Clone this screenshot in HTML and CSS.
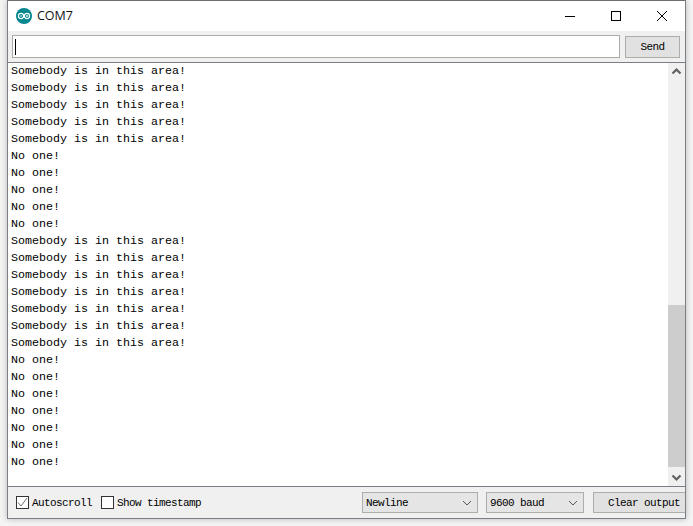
FILE: index.html
```html
<!DOCTYPE html>
<html lang="en">
<head>
<meta charset="utf-8">
<title>COM7</title>
<link rel="stylesheet" href="styles.css">
</head>
<body>
<div class="window">
  <header class="titlebar">
    <svg class="logo" width="16" height="16" viewBox="0 0 16 16"><circle cx="8" cy="8" r="8" fill="#00878f"/><circle cx="5" cy="8" r="2.6" fill="none" stroke="#fff" stroke-width="1.1"/><circle cx="11" cy="8" r="2.6" fill="none" stroke="#fff" stroke-width="1.1"/><path d="M3.8 8h2.4M9.8 8h2.4M11 6.8v2.4" stroke="#fff" stroke-width=".8"/></svg>
    <span class="title">COM7</span>
    <div class="controls">
      <svg class="ctl" width="46" height="30" viewBox="0 0 46 30"><path d="M18 15.5h10" stroke="#000"/></svg>
      <svg class="ctl" width="46" height="30" viewBox="0 0 46 30"><rect x="18.5" y="10.5" width="9" height="9" fill="none" stroke="#000"/></svg>
      <svg class="ctl" width="46" height="30" viewBox="0 0 46 30"><path d="M18 10l10 10M28 10l-10 10" stroke="#000"/></svg>
    </div>
  </header>
  <div class="sendbar">
    <div class="input"><span class="caret"></span></div>
    <button class="btn send">Send</button>
  </div>
  <main class="output">
    <pre class="log">Somebody is in this area!
Somebody is in this area!
Somebody is in this area!
Somebody is in this area!
Somebody is in this area!
No one!
No one!
No one!
No one!
No one!
Somebody is in this area!
Somebody is in this area!
Somebody is in this area!
Somebody is in this area!
Somebody is in this area!
Somebody is in this area!
Somebody is in this area!
No one!
No one!
No one!
No one!
No one!
No one!
No one!</pre>
    <div class="scrollbar">
      <svg class="arrow" width="15" height="15" viewBox="0 0 15 15"><path d="M3.5 9.5l4-4 4 4" fill="none" stroke="#606060" stroke-width="2.2"/></svg>
      <div class="track"><div class="thumb"></div></div>
      <svg class="arrow" width="15" height="15" viewBox="0 0 15 15"><path d="M3.5 5.5l4 4 4-4" fill="none" stroke="#606060" stroke-width="2.2"/></svg>
    </div>
  </main>
  <footer class="bottombar">
    <label class="check"><span class="box"><svg width="11" height="11" viewBox="0 0 11 11"><path d="M1 5.5l3 3.5 6-8" fill="none" stroke="#707070"/></svg></span>Autoscroll</label>
    <label class="check stamp"><span class="box"></span>Show timestamp</label>
    <div class="select newline">Newline<svg width="10" height="6" viewBox="0 0 10 6"><path d="M1 1l4 4 4-4" fill="none" stroke="#555"/></svg></div>
    <div class="select baud">9600 baud<svg width="10" height="6" viewBox="0 0 10 6"><path d="M1 1l4 4 4-4" fill="none" stroke="#555"/></svg></div>
    <button class="btn clear">Clear output</button>
  </footer>
</div>
</body>
</html>
```
FILE: styles.css
```css
* { box-sizing: border-box; }
html, body { margin: 0; height: 100%; background: #f4f4f4; overflow: hidden; }
body { padding: 0 7px 7px 7px; font-family: "Liberation Mono", monospace; font-size: 11.67px; color: #000; }
.window { width: 679px; height: 519px; display: flex; flex-direction: column; background: #f0f0f0; border: 1px solid #7a7f85; border-top-color: #6e6e6e; box-shadow: 0 0 6px rgba(0, 0, 0, .25); }
.titlebar { height: 30px; flex: none; display: flex; align-items: center; background: #fff; padding: 0 0 1px 8px; }
.logo { flex: none; }
.title { font-family: "Open Sans", "Liberation Sans", sans-serif; font-size: 12.5px; margin-left: 5px; color: #111; }
.controls { margin-left: auto; display: flex; }
.ctl { display: block; }
.sendbar { height: 31px; flex: none; display: flex; align-items: center; padding: 0 5px 0 4px; }
.input { width: 608px; height: 23px; background: #fff; border: 1px solid #ababab; display: flex; align-items: center; padding-left: 2px; }
.caret { width: 1px; height: 16px; background: #000; }
.btn { font-family: inherit; font-size: 11px; letter-spacing: -.6px; background: #e1e1e1; border: 1px solid #adadad; padding: 0; color: #000; }
.send { width: 55px; height: 22px; margin-left: auto; }
.output { flex: 1; display: flex; min-height: 0; background: #fff; border-top: 1px solid #7a7f85; border-bottom: 1px solid #7a7f85; }
.log { flex: 1; margin: 0; padding-left: 3px; font: inherit; line-height: 17px; }
.scrollbar { width: 17px; flex: none; display: flex; flex-direction: column; align-items: center; background: #f0f0f0; }
.arrow { flex: none; display: block; margin: 1px 0; }
.track { flex: 1; width: 100%; display: flex; flex-direction: column; justify-content: flex-end; }
.thumb { height: 162px; margin-bottom: 2px; background: #cdcdcd; }
.bottombar { height: 31px; flex: none; display: flex; align-items: center; padding-left: 8px; font-size: 11px; letter-spacing: -.6px; }
.check { display: flex; align-items: center; gap: 3px; }
.stamp { margin-left: 9px; }
.box { width: 13px; height: 13px; background: #fff; border: 1px solid #333; display: flex; }
.select { height: 21px; display: flex; align-items: center; justify-content: space-between; background: #e5e5e5; border: 1px solid #adadad; padding: 0 5px 0 3px; }
.newline { width: 116px; margin-left: auto; }
.baud { width: 98px; margin-left: 8px; }
.clear { width: 92px; height: 21px; margin-left: 9px; border-right: none; text-align: right; padding-right: 5px; }
```
